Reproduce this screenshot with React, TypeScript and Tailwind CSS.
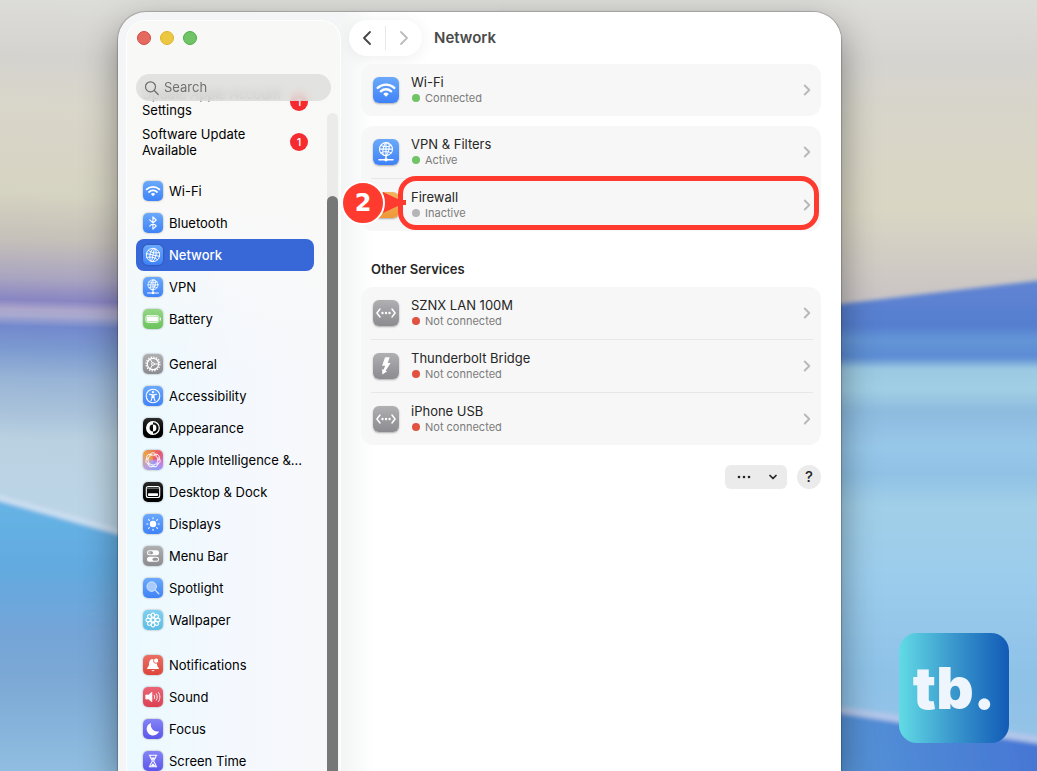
import { useState } from "react";
import type { ReactNode } from "react";
import { ChevronDown, ChevronLeft, ChevronRight } from "lucide-react";

const blue = "bg-linear-to-b from-[#6aa9fb] to-[#3f82f7]";
const gray = "bg-linear-to-b from-[#b0b0b3] to-[#8b8b90]";
const black = "bg-linear-to-b from-[#2c2c2c] to-[#000000]";
const purple = "bg-linear-to-b from-[#8583f5] to-[#5c55ea]";
const rainbow = "bg-[conic-gradient(#ea7b58,#e8566c_45deg,#c184e8_120deg,#8f9bf8_150deg,#b9a2dc_225deg,#eda044_310deg,#ea7b58)]";

function Svg({ children }: { children: ReactNode }) {
  return (
    <svg
      viewBox="0 0 20 20"
      className="w-full h-full"
      fill="none"
      stroke="white"
      strokeWidth="1.1"
      strokeLinecap="round"
      strokeLinejoin="round"
      aria-hidden="true"
    >
      {children}
    </svg>
  );
}

const wifi = (
  <Svg>
    <path d="M3.6 8.4a9.2 9.2 0 0 1 12.8 0" strokeWidth="1.8" />
    <path d="M6 11a5.8 5.8 0 0 1 8 0" strokeWidth="1.8" />
    <path d="M10 15.2 7.9 13a3 3 0 0 1 4.2 0Z" fill="white" stroke="none" />
  </Svg>
);

const bluetooth = (
  <Svg>
    <path d="m6.7 6.8 6.5 6.2-3.3 3.2V3.8l3.3 3.2-6.5 6.2" />
  </Svg>
);

const globe = (
  <Svg>
    <g transform="rotate(12 10 10)" strokeWidth="0.9">
      <circle cx="10" cy="10" r="6.7" />
      <ellipse cx="10" cy="10" rx="3" ry="6.7" />
      <path d="M10 3.3v13.4M3.3 10h13.4M4.4 6.3c3.2 1.8 8 1.8 11.2 0M4.4 13.7c3.2-1.8 8-1.8 11.2 0" />
    </g>
  </Svg>
);

const vpn = (
  <Svg>
    <g strokeWidth="0.8">
      <circle cx="10" cy="7.8" r="5" />
      <ellipse cx="10" cy="7.8" rx="2.2" ry="5" transform="rotate(12 10 7.8)" />
      <path d="M10 2.8v10M5 7.8h10M6 4.9c2.3 1.3 5.7 1.3 8 0M6 10.7c2.3-1.3 5.7-1.3 8 0" />
    </g>
    <path d="M10 13v2M4.6 16h10.8" />
    <circle cx="10" cy="16" r="1.3" fill="white" stroke="none" />
  </Svg>
);

const battery = (
  <Svg>
    <rect x="2.8" y="6.5" width="13" height="7" rx="2" strokeWidth="0.8" />
    <rect x="3.7" y="7.4" width="11.2" height="5.2" rx="1.2" fill="white" stroke="none" />
    <path d="M17.4 9v2" />
  </Svg>
);

const gear = (
  <Svg>
    <circle cx="10" cy="10" r="6.9" strokeWidth="1.3" strokeDasharray="1.4 1.31" strokeLinecap="butt" />
    <circle cx="10" cy="10" r="5.7" strokeWidth="1.2" />
    <circle cx="10" cy="10" r="1.4" strokeWidth="0.9" />
    <path d="M11.5 10h4M9.2 8.7 7.3 5.3M9.2 11.3l-1.9 3.4" strokeWidth="1" />
  </Svg>
);

const accessibility = (
  <Svg>
    <circle cx="10" cy="10" r="6.8" />
    <circle cx="10" cy="6.2" r="1.1" fill="white" stroke="none" />
    <path d="M6.5 8.2 9 8.8h2l2.5-.6M9 8.8v3l-1 3M11 8.8v3l1 3M9.4 8.8v2.6h1.2V8.8" />
  </Svg>
);

const appearance = (
  <Svg>
    <circle cx="10" cy="10" r="6.3" strokeWidth="1.2" />
    <path d="M10 3.4a6.6 6.6 0 0 0 0 13.2v-3.2a3.4 3.4 0 0 1 0-6.8Z" fill="white" stroke="none" />
    <path d="M10 6.6a3.4 3.4 0 0 1 0 6.8Z" fill="white" stroke="none" />
  </Svg>
);

const intelligence = (
  <Svg>
    {[0, 51, 103, 154, 206, 257, 309].map((deg) => (
      <path key={deg} d="M6.6 5.2c1-1.900 2.200-2.400 3.400-2.400s2.400.5 3.400 2.400" strokeWidth="0.9" transform={`rotate(${deg} 10 10)`} />
    ))}
    <circle cx="10" cy="10" r="5" strokeWidth="0.9" />
  </Svg>
);

const dock = (
  <Svg>
    <rect x="3.3" y="4.5" width="13.4" height="11" rx="2" />
    <rect x="5" y="11.2" width="10" height="2.7" rx="0.7" fill="white" stroke="none" />
    <path d="M4 6.200h12" stroke="#999" strokeWidth="0.9" />
  </Svg>
);

const sun = (
  <Svg>
    <circle cx="10" cy="10" r="3.2" fill="white" stroke="none" />
    <path d="M10 3.800v1M10 15.200v1M3.800 10h1M15.200 10h1M5.600 5.600l.7.7M13.700 13.700l.7.7M14.400 5.600l-.7.7M6.300 13.700l-.7.7" />
  </Svg>
);

const menuBar = (
  <Svg>
    <rect x="4" y="4.3" width="12" height="5" rx="2.5" fill="white" stroke="none" />
    <rect x="4" y="10.7" width="12" height="5" rx="2.5" fill="white" stroke="none" />
    <rect x="5" y="5.3" width="5" height="3" rx="1.5" fill="#97979b" stroke="none" />
    <rect x="9.5" y="11.7" width="5.5" height="3" rx="1.5" fill="#97979b" stroke="none" />
    <circle cx="6.6" cy="6.8" r="1" fill="#c8c8ca" stroke="none" />
  </Svg>
);

const magnifier = (
  <Svg>
    <circle cx="8.7" cy="8.6" r="4.8" fill="#a8cbfb" stroke="#d3e5fe" strokeWidth="0.9" />
    <path d="m12.500 12.400 3.300 3.300" strokeWidth="1.3" stroke="#d3e5fe" />
  </Svg>
);

const flower = (
  <Svg>
    {[0, 45, 90, 135, 180, 225, 270, 315].map((deg) => (
      <ellipse key={deg} cx="10" cy="5.2" rx="1.8" ry="2.2" transform={`rotate(${deg} 10 10)`} />
    ))}
    <circle cx="10" cy="10" r="2" />
  </Svg>
);

const bell = (
  <Svg>
    <path d="M10 4c-2.700 0-3.900 2-3.900 4.300 0 2.800-1 3.700-2 4.800-.3.400-.1.900.5.900h10.800c.6 0 .8-.5.500-.9-1-1.100-2-2-2-4.800" fill="white" stroke="none" />
    <path d="M10 4 14 9v3H9Z" fill="white" stroke="none" />
    <circle cx="13.2" cy="5.6" r="2.7" fill="white" stroke="#e25a4c" strokeWidth="0.9" />
    <path d="M8.300 15.200a1.800 1.400 0 0 0 3.400 0Z" fill="white" stroke="none" />
  </Svg>
);

const speaker = (
  <Svg>
    <path d="M3 8h2.500l3.400-2.800v9.600L5.500 12H3Z" fill="white" strokeWidth="0.7" />
    <path d="M11.200 8.200c.7 1 .7 2.600 0 3.600M13.300 6.800c1.300 1.800 1.300 4.600 0 6.400M15.500 5.500c1.900 2.600 1.900 6.400 0 9" strokeWidth="0.9" />
  </Svg>
);

const moon = (
  <Svg>
    <path d="M8.200 3.900a6.400 6.400 0 1 0 7.900 8.300A6.400 6.400 0 0 1 8.200 3.900Z" fill="white" stroke="none" />
  </Svg>
);

const hourglass = (
  <Svg>
    <path d="M6.300 4.200h7.400M6.300 15.800h7.400M7 4.500c0 3 2.300 4 2.300 5.500S7 12.500 7 15.500M13 4.500c0 3-2.300 4-2.300 5.500s2.300 2.500 2.300 5.500" />
    <path d="M7.800 6.500h4.400L10 9.600ZM10 12.200l2.500 3h-5Z" fill="white" stroke="none" />
  </Svg>
);

const ethernet = (
  <Svg>
    <path d="M5.400 6.900 3 10l2.400 3.100M14.600 6.900 17 10l-2.400 3.100" />
    <g fill="white" stroke="none">
      <circle cx="7.3" cy="10" r="0.9" />
      <circle cx="10" cy="10" r="0.9" />
      <circle cx="12.7" cy="10" r="0.9" />
    </g>
  </Svg>
);

const bolt = (
  <Svg>
    <path d="M9.300 3.300h3.500l-1.500 4.300h2.200l-3.800 6 1.200.5-3.700 2.500-.2-4.200 1.100.5 1.300-3.100H7Z" fill="white" stroke="none" />
  </Svg>
);

type SidebarItem = { name: string; tone: string; icon: ReactNode };

const groups: SidebarItem[][] = [
  [
    { name: "Wi-Fi", tone: blue, icon: wifi },
    { name: "Bluetooth", tone: blue, icon: bluetooth },
    { name: "Network", tone: blue, icon: globe },
    { name: "VPN", tone: blue, icon: vpn },
    { name: "Battery", tone: "bg-linear-to-b from-[#93d784] to-[#6bc35c]", icon: battery },
  ],
  [
    { name: "General", tone: gray, icon: gear },
    { name: "Accessibility", tone: blue, icon: accessibility },
    { name: "Appearance", tone: black, icon: appearance },
    { name: "Apple Intelligence &...", tone: rainbow, icon: intelligence },
    { name: "Desktop & Dock", tone: black, icon: dock },
    { name: "Displays", tone: blue, icon: sun },
    { name: "Menu Bar", tone: gray, icon: menuBar },
    { name: "Spotlight", tone: blue, icon: magnifier },
    { name: "Wallpaper", tone: "bg-linear-to-b from-[#7fd0f0] to-[#5cbde6]", icon: flower },
  ],
  [
    { name: "Notifications", tone: "bg-linear-to-b from-[#ea6f63] to-[#de4438]", icon: bell },
    { name: "Sound", tone: "bg-linear-to-b from-[#ea6475] to-[#dc3f52]", icon: speaker },
    { name: "Focus", tone: purple, icon: moon },
    { name: "Screen Time", tone: purple, icon: hourglass },
  ],
];

function Badge() {
  return (
    <span className="w-[18px] h-[18px] rounded-full bg-[#f52b30] text-white text-[11px] font-medium flex items-center justify-center">
      1
    </span>
  );
}

function Sidebar() {
  const [selected, setSelected] = useState("Network");

  return (
    <aside className="w-[215px] shrink-0 mt-2 ml-2 flex flex-col overflow-hidden rounded-t-[20px] border border-b-0 border-white bg-linear-to-r from-[#ebfaff] via-[#f4f8fe] to-[#f8f8f9] relative">
      <div className="absolute inset-x-0 top-0 h-[360px] bg-linear-to-b from-[#f8f8f6] via-[#f9f9f8] to-[#f9f9f8]/0" />

      <div className="relative flex gap-[9px] pt-[10px] pl-[10px]">
        <button aria-label="Close" className="w-[14px] h-[14px] rounded-full bg-[#e46a61] border border-[#d4493f]" />
        <button aria-label="Minimize" className="w-[14px] h-[14px] rounded-full bg-[#ecc742] border border-[#dfb12c]" />
        <button aria-label="Zoom" className="w-[14px] h-[14px] rounded-full bg-[#70c465] border border-[#50ac45]" />
      </div>

      <label className="relative z-10 mt-[29px] ml-[9px] mr-[9px] h-[27px] shrink-0 rounded-full bg-[#dededc]/85 backdrop-blur-[4px] flex items-center gap-1 pl-2">
        <svg viewBox="0 0 16 16" className="w-4 h-4 shrink-0" fill="none" stroke="#6c6c6c" strokeWidth="1.2" strokeLinecap="round" aria-hidden="true">
          <circle cx="6.5" cy="6.8" r="5" />
          <path d="m10.200 10.500 4 4" />
        </svg>
        <span className="sr-only">Search</span>
        <input
          type="search"
          placeholder="Search"
          className="w-full bg-transparent text-[13px] outline-none placeholder:text-[#707070]"
        />
      </label>

      <div className="relative flex flex-1 min-h-0 -mt-[15px]">
        <nav className="flex-1 min-w-0 pl-[9px] pr-[13px] overflow-hidden">
          <a href="#account" className="flex items-center justify-between pl-[6px] pr-[6px] mb-2 leading-4">
            <span>
              Update Apple Account
              <br />
              Settings
            </span>
            <Badge />
          </a>
          <a href="#update" className="flex items-center justify-between pl-[6px] pr-[6px] mb-[17px] leading-4">
            <span>
              Software Update
              <br />
              Available
            </span>
            <Badge />
          </a>

          {groups.map((group, i) => (
            <ul key={i} className="mb-[13px]">
              {group.map((item) => (
                <li key={item.name}>
                  <a
                    href="#network"
                    onClick={() => setSelected(item.name)}
                    className={`flex items-center gap-[6px] h-8 pl-[7px] rounded-lg whitespace-nowrap leading-5 ${
                      selected === item.name ? "bg-[#3867d8] text-white font-medium" : ""
                    }`}
                  >
                    <span className={`w-5 h-5 shrink-0 rounded-[5px] shadow-[0_0_2px_rgba(0,0,0,0.4)] ${item.tone}`}>
                      {item.icon}
                    </span>
                    {item.name}
                  </a>
                </li>
              ))}
            </ul>
          ))}
        </nav>

        <div className="w-[11px] mr-[2px] mt-[27px] rounded-t-full bg-[#ebebea] pt-[83px]">
          <div className="h-full rounded-t-full bg-[#767777]" />
        </div>
      </div>
    </aside>
  );
}

type ServiceProps = {
  name: string;
  status: string;
  dot: string;
  tone: string;
  icon?: ReactNode;
  children?: ReactNode;
};

function Service({ name, status, dot, tone, icon, children }: ServiceProps) {
  return (
    <li className="relative">
      <button className="w-full h-[52px] pl-3 pr-[5px] flex items-center text-left">
        <span className={`w-[26px] h-[26px] shrink-0 rounded-md shadow-[0_1px_2px_rgba(0,0,0,0.3)] ${tone}`}>
          {icon}
        </span>
        <span className="ml-3 flex-1">
          <span className="block leading-4 text-[#262626]">{name}</span>
          <span className="flex items-center gap-[5px] pl-px text-[11px] leading-[17px] text-[#7b7b7b]">
            <span className={`w-2 h-2 rounded-full ${dot}`} />
            {status}
          </span>
        </span>
        <ChevronRight className="w-[18px] h-[18px] text-[#b8b8b8]" strokeWidth={2.5} />
      </button>
      {children}
    </li>
  );
}

function Card({ children }: { children: ReactNode }) {
  return <ul className="rounded-xl bg-[#f7f7f7]">{children}</ul>;
}

function Divider() {
  return <li aria-hidden="true" className="h-px ml-[10px] mr-2 bg-[#e7e7e7]" />;
}

function StepMarker() {
  return (
    <div className="absolute left-[37px] right-[2px] -top-[3px] h-[54px] rounded-[18px] border-[5px] border-[#ff3b30] pointer-events-none">
      <svg viewBox="0 0 24 24" className="absolute -left-[20px] top-[10px] w-6 h-6" fill="#ff3b30" aria-hidden="true">
        <path d="M0 1 17 9h6v5h-6L0 22Z" />
      </svg>
      <span className="absolute -left-[62px] top-0 w-[44px] h-[44px] rounded-full border-2 border-white bg-[#ff3b30] text-white font-['DejaVu_Sans',sans-serif] font-bold text-2xl flex items-center justify-center">
        2
      </span>
    </div>
  );
}

function NetworkPane() {
  const offline = "bg-[#e15241]";
  const online = "bg-[#70c465]";

  return (
    <main className="flex-1 min-w-0 pl-5 pr-5 bg-linear-to-r from-[#f3f4f4] to-white to-[32px]">
      <header className="flex items-center gap-3 pt-2 -ml-3">
        <div className="w-[73px] h-9 rounded-full bg-white shadow-[0_2px_16px_rgba(0,0,0,0.07)] flex items-center">
          <button aria-label="Back" className="flex-1 flex justify-center border-r border-[#e8e8e8]">
            <ChevronLeft className="w-6 h-6 text-[#454545]" strokeWidth={1.8} />
          </button>
          <button aria-label="Forward" className="flex-1 flex justify-center">
            <ChevronRight className="w-6 h-6 text-[#bcbcbc]" strokeWidth={1.8} />
          </button>
        </div>
        <h1 className="text-[15px] font-semibold text-[#4b4b4b]">Network</h1>
      </header>

      <div className="mt-2 flex flex-col gap-[10px]">
        <Card>
          <Service name="Wi-Fi" status="Connected" dot={online} tone={blue} icon={wifi} />
        </Card>
        <Card>
          <Service name="VPN & Filters" status="Active" dot={online} tone={blue} icon={vpn} />
          <Divider />
          <Service
            name="Firewall"
            status="Inactive"
            dot="bg-[#b5b5b5]"
            tone="bg-linear-to-b from-[#f3b45f] to-[#ee9838]"
          >
            <StepMarker />
          </Service>
        </Card>
      </div>

      <h2 className="mt-7 mb-2 ml-[10px] leading-5 font-semibold text-[#262626]">Other Services</h2>
      <Card>
        <Service name="SZNX LAN 100M" status="Not connected" dot={offline} tone={gray} icon={ethernet} />
        <Divider />
        <Service name="Thunderbolt Bridge" status="Not connected" dot={offline} tone={gray} icon={bolt} />
        <Divider />
        <Service name="iPhone USB" status="Not connected" dot={offline} tone={gray} icon={ethernet} />
      </Card>

      <div className="mt-5 flex justify-end gap-[10px]">
        <button aria-label="More actions" className="w-[62px] h-6 rounded-md bg-[#ebebeb] flex items-center justify-between pl-3 pr-2">
          <svg viewBox="0 0 14 4" className="w-[14px] h-1" fill="#262626" aria-hidden="true">
            <circle cx="2" cy="2" r="1.3" />
            <circle cx="7" cy="2" r="1.3" />
            <circle cx="12" cy="2" r="1.3" />
          </svg>
          <ChevronDown className="w-3 h-3 text-[#262626]" strokeWidth={3.5} />
        </button>
        <button aria-label="Help" className="w-6 h-6 rounded-full bg-[#ebebeb] text-[15px] font-medium text-[#262626] flex items-center justify-center">
          ?
        </button>
      </div>
    </main>
  );
}

function Wallpaper() {
  return (
    <svg viewBox="0 0 1037 771" preserveAspectRatio="none" className="absolute inset-0 w-full h-full" aria-hidden="true">
      <defs>
        <linearGradient id="leftSky" gradientUnits="userSpaceOnUse" x1="0" y1="0" x2="-20" y2="771">
          <stop offset="0" stopColor="#dcdcd9" />
          <stop offset="0.07" stopColor="#d5d3cf" />
          <stop offset="0.14" stopColor="#d9d6ca" />
          <stop offset="0.25" stopColor="#d5d3c1" />
          <stop offset="0.31" stopColor="#c5c0b9" />
          <stop offset="0.36" stopColor="#a9a4c0" />
          <stop offset="0.388" stopColor="#8885c3" />
          <stop offset="0.4" stopColor="#aca6cb" />
          <stop offset="0.408" stopColor="#a9a9cf" />
          <stop offset="0.422" stopColor="#7389cd" />
          <stop offset="0.45" stopColor="#7b99d0" />
          <stop offset="0.49" stopColor="#98b4d6" />
          <stop offset="0.53" stopColor="#a8c1da" />
          <stop offset="0.57" stopColor="#bad1e1" />
          <stop offset="0.7" stopColor="#bcd6e8" />
        </linearGradient>
        <linearGradient id="leftSea" gradientUnits="userSpaceOnUse" x1="0" y1="500" x2="0" y2="771">
          <stop offset="0" stopColor="#66b3e5" />
          <stop offset="0.25" stopColor="#62aae0" />
          <stop offset="0.48" stopColor="#74a5d8" />
          <stop offset="0.65" stopColor="#7ba8d5" />
          <stop offset="1" stopColor="#90bde0" />
        </linearGradient>
        <linearGradient id="rightSky" gradientUnits="userSpaceOnUse" x1="0" y1="0" x2="0" y2="300">
          <stop offset="0" stopColor="#dcdcd9" />
          <stop offset="0.2" stopColor="#d6d4d0" />
          <stop offset="0.4" stopColor="#d8d6c9" />
          <stop offset="0.7" stopColor="#dad6c4" />
          <stop offset="1" stopColor="#c9c4c4" />
        </linearGradient>
        <linearGradient id="rightSea" gradientUnits="userSpaceOnUse" x1="0" y1="290" x2="0" y2="740">
          <stop offset="0" stopColor="#5e83d2" />
          <stop offset="0.08" stopColor="#567fcf" />
          <stop offset="0.11" stopColor="#6395d7" />
          <stop offset="0.15" stopColor="#5c8cd4" />
          <stop offset="0.175" stopColor="#9bc9e2" />
          <stop offset="0.22" stopColor="#a1cfe4" />
          <stop offset="0.27" stopColor="#8dbbdf" />
          <stop offset="0.35" stopColor="#97c7e9" />
          <stop offset="0.41" stopColor="#90c2e5" />
          <stop offset="0.48" stopColor="#a1cfe8" />
          <stop offset="0.65" stopColor="#9bccec" />
          <stop offset="0.85" stopColor="#8ec2e7" />
          <stop offset="1" stopColor="#94c3e6" />
        </linearGradient>
        <linearGradient id="rightDeep" gradientUnits="userSpaceOnUse" x1="841" y1="771" x2="1037" y2="740">
          <stop offset="0" stopColor="#5593d7" />
          <stop offset="1" stopColor="#4676d4" />
        </linearGradient>
        <filter id="soft" x="-5%" y="-20%" width="110%" height="140%">
          <feGaussianBlur stdDeviation="2" />
        </filter>
      </defs>
      <rect width="520" height="771" fill="url(#leftSky)" />
      <rect x="500" width="537" height="771" fill="url(#rightSky)" />
      <g filter="url(#soft)">
        <path d="M-20 490 0 498 130 535 500 650V790H-20Z" fill="url(#leftSea)" />
        <path d="M-20 493 130 535" stroke="#d0e2f2" strokeWidth="5" />
        <path d="M500 344 841 304 1060 278V800H500Z" fill="url(#rightSea)" />
        <path d="M800 707 1060 747V800H800Z" fill="url(#rightDeep)" />
        <path d="M800 704 1060 743" stroke="#b3c7ea" strokeWidth="7" />
      </g>
    </svg>
  );
}

export default function App() {
  return (
    <div className="relative h-screen overflow-hidden pt-3 pl-[118px] pr-[196px] font-[Inter,'Liberation_Sans',sans-serif] text-[13px] text-black">
      <Wallpaper />
      <div className="relative h-full flex rounded-t-[28px] bg-[#f4f5f6] overflow-hidden shadow-[0_0_1px_1px_rgba(0,0,0,0.2),0_14px_36px_rgba(0,0,0,0.4)]">
        <Sidebar />
        <NetworkPane />
      </div>
      <div className="absolute right-7 bottom-7 w-[110px] h-[110px] rounded-[18px] bg-linear-to-r from-[#62dbe5] via-[#3a97cc] to-[#135ab6] flex items-center justify-center font-[Inter,sans-serif] font-black text-[58px] leading-none text-[#eef5fc]">
        tb.
      </div>
    </div>
  );
}
